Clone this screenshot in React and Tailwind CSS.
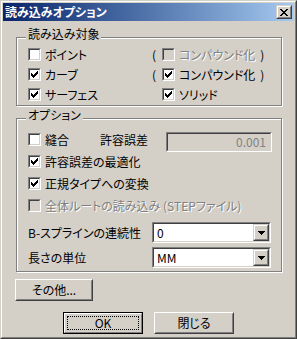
const sunkenOuter = "border border-t-[#808080] border-l-[#808080] border-r-white border-b-white";
const sunkenInner = "border border-t-[#404040] border-l-[#404040] border-r-[#d4d0c8] border-b-[#d4d0c8]";
const raisedOuter = "border border-t-white border-l-white border-r-[#404040] border-b-[#404040]";
const raisedInner = "border border-t-[#d4d0c8] border-l-[#d4d0c8] border-r-[#808080] border-b-[#808080]";

function Tick() {
  return (
    <svg width="7" height="7" viewBox="0 0 7 7" className="ml-[1px] mt-[1px]" shapeRendering="crispEdges">
      <path
        fill="#000"
        d="M6 0h1v1h-1z M5 1h2v1h-2z M0 2h1v1h-1z M4 2h3v1h-3z M0 3h2v1h-2z M3 3h3v1h-3z M0 4h5v1h-5z M1 5h3v1h-3z M2 6h1v1h-1z"
      />
    </svg>
  );
}

function CheckBox({ checked, disabled }) {
  return (
    <span className={`flex h-[13px] w-[13px] shrink-0 ${sunkenOuter}`}>
      <span className={`flex flex-1 ${sunkenInner} ${disabled ? "bg-[#d4d0c8]" : "bg-white"}`}>
        {checked && <Tick />}
      </span>
    </span>
  );
}

function Label({ children, disabled }) {
  return (
    <span
      className={
        disabled
          ? "whitespace-nowrap text-[#808080] [text-shadow:1px_1px_0_#fff]"
          : "whitespace-nowrap text-black"
      }
    >
      {children}
    </span>
  );
}

function Check({ label, checked, disabled }) {
  return (
    <div className="flex items-center gap-[4px]">
      <CheckBox checked={checked} disabled={disabled} />
      <Label disabled={disabled}>{label}</Label>
    </div>
  );
}

function Combo({ value }) {
  return (
    <div className={`flex h-[21px] w-[119px] ${sunkenOuter}`}>
      <div className={`flex flex-1 items-center bg-white ${sunkenInner}`}>
        <span className="flex-1 pl-[3px] text-black">{value}</span>
        <div className="flex h-full w-[16px] border border-t-[#d4d0c8] border-l-[#d4d0c8] border-r-[#404040] border-b-[#404040]">
          <div className="flex flex-1 items-center justify-center border border-t-white border-l-white border-r-[#808080] border-b-[#808080] bg-[#d4d0c8]">
            <svg width="7" height="4" viewBox="0 0 7 4" shapeRendering="crispEdges">
              <path fill="#000" d="M0 0h7v1h-7z M1 1h5v1h-5z M2 2h3v1h-3z M3 3h1v1h-1z" />
            </svg>
          </div>
        </div>
      </div>
    </div>
  );
}

function Button({ children, isDefault }) {
  if (isDefault) {
    return (
      <div className="flex h-[22px] w-[80px] border border-black">
        <div className="flex flex-1 border border-t-white border-l-white border-r-[#808080] border-b-[#808080] p-[2px]">
          <div className="flex flex-1 items-center justify-center border border-dotted border-black text-black">
            {children}
          </div>
        </div>
      </div>
    );
  }
  return (
    <div className={`flex h-[22px] w-[80px] ${raisedOuter}`}>
      <div className={`flex flex-1 items-center justify-center text-black ${raisedInner}`}>{children}</div>
    </div>
  );
}

function Group({ title, className, children }) {
  return (
    <div
      className={`relative ml-[13px] w-[266px] border border-[#808080] shadow-[inset_1px_1px_0_#fff,1px_1px_0_#fff] ${className}`}
    >
      <span className="absolute -top-[11px] left-[9px] bg-[#d4d0c8] px-[2px] leading-[14px] text-black">{title}</span>
      {children}
    </div>
  );
}

export default function App() {
  return (
    <div className="h-[339px] w-[297px] bg-[#d4d0c8] font-['Noto_Sans_CJK_JP',sans-serif] text-[12px] leading-none [font-feature-settings:'palt']">
      <div className="flex h-full flex-col border border-t-[#d4d0c8] border-l-[#d4d0c8] border-r-[#404040] border-b-[#404040]">
        <div className="flex flex-1 flex-col border border-t-white border-l-white border-r-[#808080] border-b-[#808080] p-[1px]">
          {/* title bar */}
          <div className="flex h-[18px] items-center bg-linear-to-r from-[#0a246a] to-[#a6caf0] pl-[2px] pr-[2px]">
            <span className="flex-1 font-bold text-white">読み込みオプション</span>
            <div className="flex h-[14px] w-[16px] border border-t-[#d4d0c8] border-l-[#d4d0c8] border-r-[#404040] border-b-[#404040]">
              <div className="flex flex-1 items-center justify-center border border-t-white border-l-white border-r-[#808080] border-b-[#808080] bg-[#d4d0c8]">
                <svg width="8" height="7" viewBox="0 0 8 7" shapeRendering="crispEdges">
                  <path
                    fill="#000"
                    d="M0 0h2v1h-2z M6 0h2v1h-2z M1 1h2v1h-2z M5 1h2v1h-2z M2 2h4v1h-4z M3 3h2v1h-2z M2 4h4v1h-4z M1 5h2v1h-2z M5 5h2v1h-2z M0 6h2v1h-2z M6 6h2v1h-2z"
                  />
                </svg>
              </div>
            </div>
          </div>

          {/* client */}
          <div className="flex flex-1 flex-col">
            <Group title="読み込み対象" className="mt-[16px] h-[69px]">
              <div className="grid grid-cols-[124px_1fr] gap-y-[1px] pl-[11px] pt-[7px]">
                <div className="flex h-[19px] items-center">
                  <Check label="ポイント" />
                </div>
                <div className="flex h-[19px] items-center">
                  <span className="w-[10px]">(</span>
                  <Check label="コンパウンド化" disabled />
                  <span className="ml-[5px]">)</span>
                </div>
                <div className="flex h-[19px] items-center">
                  <Check label="カーブ" checked />
                </div>
                <div className="flex h-[19px] items-center">
                  <span className="w-[10px]">(</span>
                  <Check label="コンパウンド化" checked />
                  <span className="ml-[5px]">)</span>
                </div>
                <div className="flex h-[19px] items-center">
                  <Check label="サーフェス" checked />
                </div>
                <div className="flex h-[19px] items-center pl-[10px]">
                  <Check label="ソリッド" checked />
                </div>
              </div>
            </Group>

            <Group title="オプション" className="mt-[12px] h-[154px]">
              <div className="flex flex-col pl-[11px] pt-[10px]">
                <div className="flex h-[21px] items-center">
                  <div className="w-[72px]">
                    <Check label="縫合" />
                  </div>
                  <span className="w-[66px]">許容誤差</span>
                  <div className={`mt-[3px] flex h-[20px] w-[106px] self-start ${sunkenOuter}`}>
                    <div className={`flex flex-1 items-center justify-end bg-[#d4d0c8] pr-[4px] text-[#808080] ${sunkenInner}`}>
                      0.001
                    </div>
                  </div>
                </div>
                <div className="mt-[1px] flex h-[21px] items-center">
                  <Check label="許容誤差の最適化" checked />
                </div>
                <div className="mt-[1px] flex h-[21px] items-center">
                  <Check label="正規タイプへの変換" checked />
                </div>
                <div className="mt-[1px] flex h-[21px] items-center">
                  <Check label="全体ルートの読み込み (STEPファイル)" disabled />
                </div>
                <div className="mt-[6px] flex h-[21px] items-center">
                  <span className="w-[124px]">B-スプラインの連続性</span>
                  <Combo value="0" />
                </div>
                <div className="mt-[4px] flex h-[21px] items-center">
                  <span className="w-[124px]">長さの単位</span>
                  <Combo value="MM" />
                </div>
              </div>
            </Group>

            <div className="ml-[12px] mt-[7px] flex">
              <div className={`flex h-[22px] w-[78px] ${raisedOuter}`}>
                <div className={`flex flex-1 items-center justify-center ${raisedInner}`}>その他...</div>
              </div>
            </div>

            <div className="ml-[60px] mt-[11px] flex gap-[11px]">
              <Button isDefault>OK</Button>
              <Button>閉じる</Button>
            </div>
          </div>
        </div>
      </div>
    </div>
  );
}
